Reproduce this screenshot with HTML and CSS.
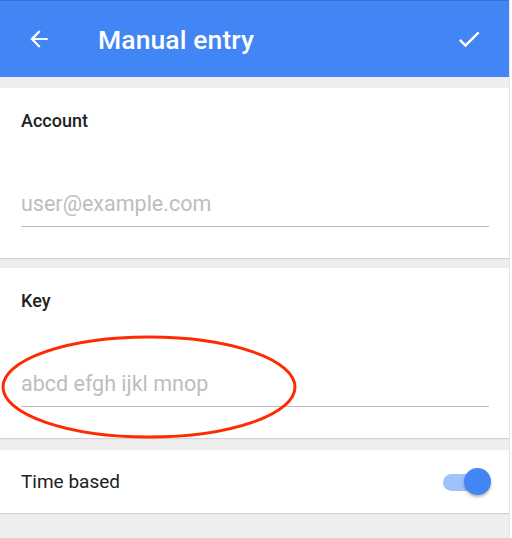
FILE: index.html
```html
<!DOCTYPE html>
<html lang="en">
<head>
<meta charset="UTF-8">
<meta name="viewport" content="width=device-width, initial-scale=1.0">
<title>Manual entry</title>
<link rel="stylesheet" href="styles.css">
</head>
<body>
<div class="screen">
    <div class="toolbar">
        <svg class="icon back" viewBox="0 0 24 24" width="24" height="24">
            <path d="M20 11H7.83l5.59-5.59L12 4l-8 8 8 8 1.41-1.41L7.83 13H20v-2z" fill="#fff"/>
        </svg>
        <h1 class="title">Manual entry</h1>
        <svg class="icon done" viewBox="0 0 24 24" width="24" height="24">
            <path d="M9 16.17L4.83 12l-1.42 1.41L9 19 21 7l-1.41-1.41z" fill="#fff"/>
        </svg>
    </div>

    <div class="card">
        <div class="label">Account</div>
        <input class="field" type="text" placeholder="user@example.com">
    </div>

    <div class="card key-card">
        <div class="label">Key</div>
        <input class="field" type="text" placeholder="abcd efgh ijkl mnop">
        <svg class="mark" width="300" height="108" viewBox="0 0 300 108">
            <ellipse cx="149" cy="53" rx="146" ry="50" fill="none" stroke="#ff2a00" stroke-width="3"/>
        </svg>
    </div>

    <div class="card row-card">
        <span class="row-text">Time based</span>
        <div class="switch">
            <div class="track"></div>
            <div class="knob"></div>
        </div>
    </div>
</div>
</body>
</html>
```

FILE: styles.css
```css
body {
    margin: 0;
    background-color: #fff;
    font-family: Roboto, "Noto Sans", Arial, sans-serif;
}
.screen {
    width: 509px;
    height: 538px;
    background-color: #eeeeee;
    border-right: 1px solid #e4e4e4;
    overflow: hidden;
}
.toolbar {
    height: 76px;
    border-top: 1px solid #3a6fd8;
    background-color: #4285f4;
    display: flex;
    align-items: center;
    padding: 0 26px 0 26px;
    margin-bottom: 11px;
}
.icon {
    display: block;
    flex: none;
}
.back {
    width: 26px;
    height: 26px;
}
.title {
    flex: 1;
    margin: 0 0 0 46px;
    color: #fff;
    font-size: 26.5px;
    font-weight: 500;
    letter-spacing: 0.1px;
}
.done {
    width: 28px;
    height: 28px;
}
.card {
    position: relative;
    background-color: #fff;
    height: 170px;
    box-sizing: border-box;
    padding: 22px 20px 0 21px;
    margin-bottom: 10px;
    box-shadow: 0 1px 1px rgba(0,0,0,0.12);
}
.key-card {
    margin-bottom: 12px;
}
.label {
    font-size: 18px;
    font-weight: 500;
    color: #212121;
    line-height: 22px;
}
.field {
    display: block;
    width: 100%;
    box-sizing: border-box;
    margin-top: 59px;
    padding: 0 0 9px 0;
    border: none;
    border-bottom: 1.5px solid #bdbdbd;
    outline: none;
    font-family: inherit;
    font-size: 21.5px;
    line-height: 26px;
    color: #212121;
    background: transparent;
}
.field::placeholder {
    color: #bdbdbd;
}
.mark {
    position: absolute;
    left: 0;
    top: 66px;
}
.row-card {
    height: 63px;
    padding: 0 18px 0 21px;
    display: flex;
    align-items: center;
    justify-content: space-between;
}
.row-text {
    font-size: 19px;
    color: #212121;
}
.switch {
    position: relative;
    width: 50px;
    height: 28px;
}
.track {
    position: absolute;
    left: 2px;
    top: 6px;
    width: 38px;
    height: 17px;
    border-radius: 9px;
    background-color: #a0c2fa;
}
.knob {
    position: absolute;
    right: 0;
    top: 0;
    width: 27px;
    height: 27px;
    border-radius: 50%;
    background-color: #4285f4;
    box-shadow: 0 2px 3px rgba(0,0,0,0.3);
}
```
